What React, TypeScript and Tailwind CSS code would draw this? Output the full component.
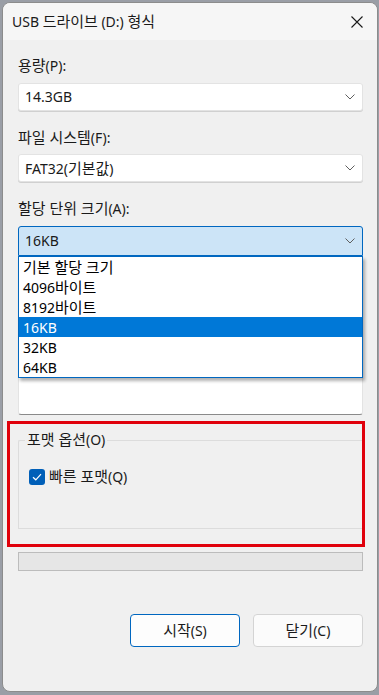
import React from "react";

const font = { fontFamily: '"Noto Sans", "Noto Sans CJK KR", sans-serif' };

function K({ t }: { t: string }) {
  const parts = t.split(/([\uAC00-\uD7A3\u3131-\u318E]+(?: [\uAC00-\uD7A3\u3131-\u318E]+)*)/);
  return (
    <>
      {parts.map((p, i) =>
        /[\uAC00-\uD7A3]/.test(p) ? (
          <span key={i} className="text-[1.07em] leading-none">
            {p}
          </span>
        ) : (
          <span key={i}>{p}</span>
        )
      )}
    </>
  );
}

function Chevron() {
  return (
    <svg width="10" height="6" viewBox="0 0 10 6" className="shrink-0">
      <path d="M0.5 0.5 L5 5 L9.5 0.5" fill="none" stroke="#5f5f5f" strokeWidth="1" />
    </svg>
  );
}

function Select({ value, active }: { value: string; active?: boolean }) {
  return (
    <div
      className={
        active
          ? "h-[30px] flex items-center justify-between pl-[6px] pr-[7px] bg-[#cce4f7] border border-[#0067c0] rounded-t-[3px]"
          : "h-[28px] flex items-center justify-between pl-[6px] pr-[7px] bg-white border border-[#e3e3e3] rounded-[3px] shadow-[0_1px_0_#d0d0d0]"
      }
    >
      <span className="text-[14px] text-[#1a1a1a] leading-none">
        <K t={value} />
      </span>
      <Chevron />
    </div>
  );
}

export default function App() {
  const items = ["기본 할당 크기", "4096바이트", "8192바이트", "16KB", "32KB", "64KB"];
  return (
    <div className="w-[379px] h-[695px] bg-[#9a9ea6] p-[2px] pr-[1px] pb-[3px]" style={font}>
      <div className="h-full bg-[#f0f0f0] border border-[#8c8c8c] rounded-[8px] overflow-hidden flex flex-col">
        {/* title bar */}
        <div className="h-[37px] bg-[#f6f6f6] flex items-center justify-between pl-[9px] pr-[14px] shrink-0">
          <span className="text-[14px] text-[#1a1a1a]">
            <K t="USB 드라이브 (D:) 형식" />
          </span>
          <svg width="12" height="12" viewBox="0 0 12 12">
            <path d="M0.5 0.5 L11.5 11.5 M11.5 0.5 L0.5 11.5" stroke="#1a1a1a" strokeWidth="1.1" />
          </svg>
        </div>

        <div className="flex flex-col px-[15px] pr-[14px]">
          <div className="mt-[15px] h-[20px] flex items-center text-[14px] text-[#1a1a1a]">
            <K t="용량(P):" />
          </div>
          <div className="mt-[8px]">
            <Select value="14.3GB" />
          </div>

          <div className="mt-[16px] h-[20px] flex items-center text-[14px] text-[#1a1a1a]">
            <K t="파일 시스템(F):" />
          </div>
          <div className="mt-[7px]">
            <Select value="FAT32(기본값)" />
          </div>

          <div className="mt-[16px] h-[20px] flex items-center text-[14px] text-[#1a1a1a]">
            <K t="할당 단위 크기(A):" />
          </div>
          <div className="mt-[8px]">
            <Select value="16KB" active />
          </div>

          {/* area under dropdown with overlay list */}
          <div className="relative h-[159px] flex flex-col justify-end">
            <div className="h-[46px] bg-white border-x border-[#e3e3e3] border-b border-b-[#8a8a8a] rounded-b-[3px]" />
            <div className="absolute left-0 right-0 top-0 bg-white border border-[#0067c0] shadow-[2px_3px_3px_rgba(0,0,0,0.3)] flex flex-col">
              {items.map((t) => (
                <div
                  key={t}
                  className={
                    t === "16KB"
                      ? "h-[20px] flex items-center pl-[4px] text-[14px] bg-[#0078d7] text-white"
                      : "h-[20px] flex items-center pl-[4px] text-[14px] text-[#000]"
                  }
                >
                  <K t={t} />
                </div>
              ))}
            </div>
          </div>

          {/* red annotation box */}
          <div className="mt-[6px] -ml-[11px] -mr-[2px] h-[126px] border-[3px] border-[#e0000b] pt-[16px] pl-[8px]">
            <div className="relative h-[89px] border border-r-0 border-[#dcdcdc] rounded-tl-[2px]">
              <div className="absolute -top-[11px] left-[6px] px-[2px] bg-[#f0f0f0] text-[14px] text-[#1a1a1a] leading-[20px]">
                <K t="포맷 옵션(O)" />
              </div>
              <div className="mt-[25px] ml-[10px] flex items-center gap-[4px]">
                <div className="w-[16px] h-[16px] rounded-[3px] bg-[#005fb8] flex items-center justify-center">
                  <svg width="10" height="8" viewBox="0 0 10 8">
                    <path d="M1 4.2 L3.8 6.8 L9 1.2" fill="none" stroke="white" strokeWidth="1.2" />
                  </svg>
                </div>
                <span className="text-[14px] text-[#1a1a1a]">
                  <K t="빠른 포맷(Q)" />
                </span>
              </div>
            </div>
          </div>

          {/* progress bar */}
          <div className="mt-[5px] h-[19px] bg-[#e6e6e6] border border-[#bcbcbc]" />

          {/* buttons */}
          <div className="mt-[43px] flex justify-end gap-[13px]">
            <div className="w-[110px] h-[33px] bg-[#fdfdfd] border border-[#0067c0] rounded-[4px] flex items-center justify-center text-[14px] text-[#1a1a1a]">
              <K t="시작(S)" />
            </div>
            <div className="w-[110px] h-[33px] bg-[#fbfbfb] border border-[#d4d4d4] rounded-[4px] flex items-center justify-center text-[14px] text-[#1a1a1a]">
              <K t="닫기(C)" />
            </div>
          </div>
        </div>
      </div>
    </div>
  );
}
